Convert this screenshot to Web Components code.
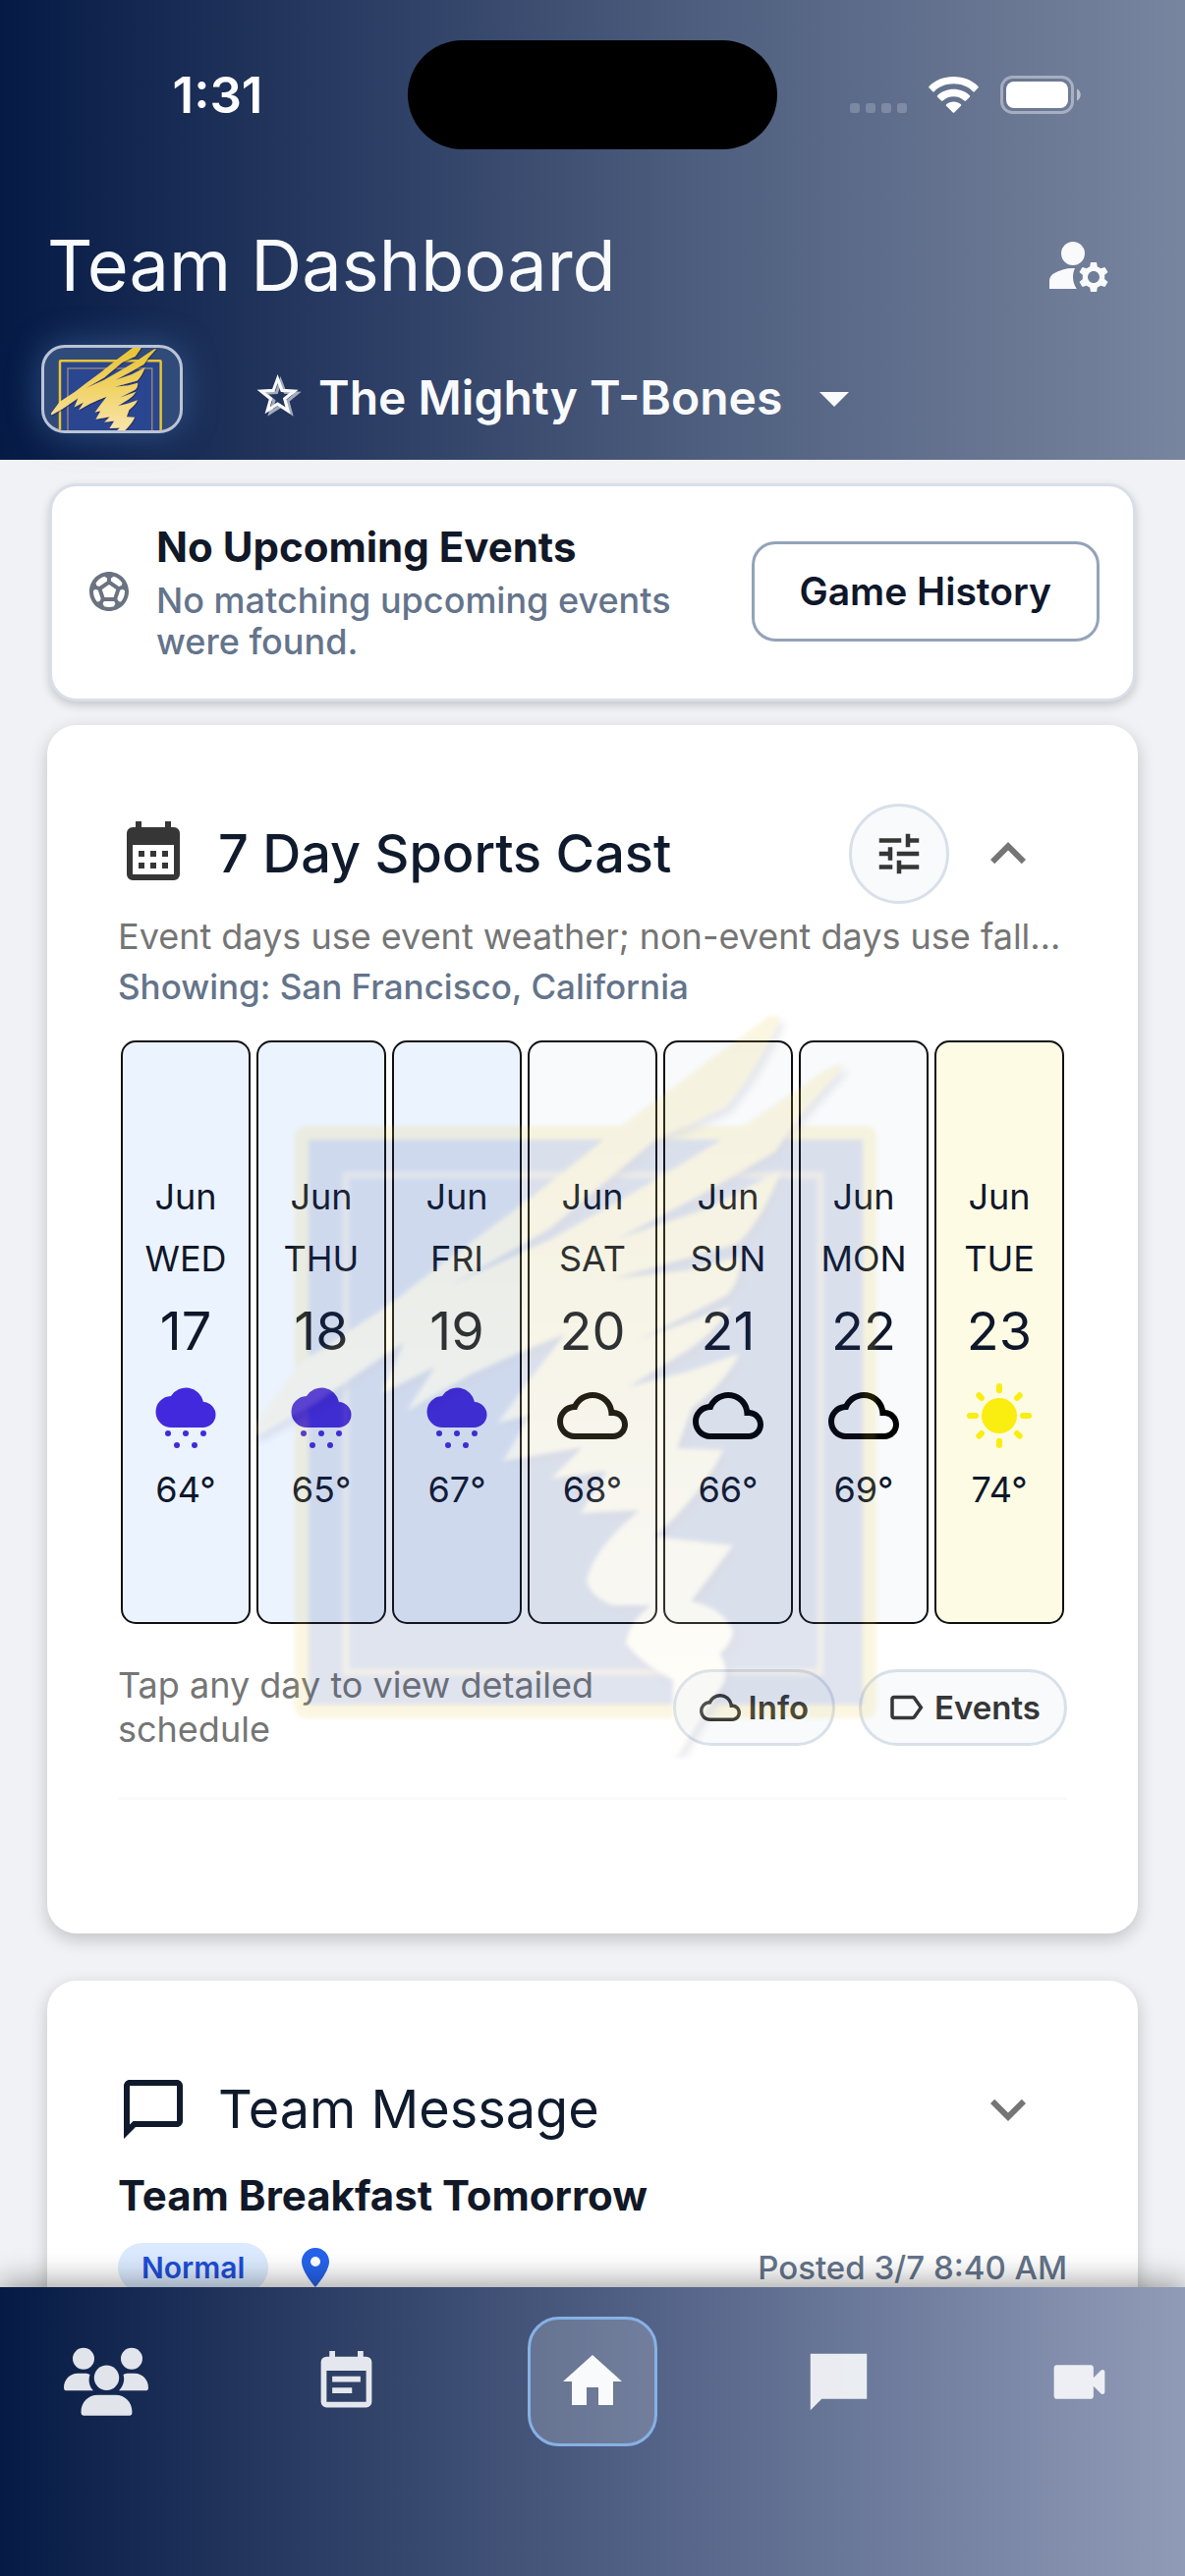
<!DOCTYPE html>
<html lang="en">
<head>
<meta charset="utf-8">
<meta name="viewport" content="width=device-width, initial-scale=1">
<title>Team Dashboard</title>
<style>
  html, body {
    margin: 0;
    height: 100%;
    background: #f1f2f5;
    font-family: Inter, "Noto Sans", sans-serif;
    color: #0f172a;
  }
</style>
</head>
<body>
<team-app>
  <status-bar slot="header" time="1:31"></status-bar>
  <team-header slot="header" heading="Team Dashboard" team="The Mighty T-Bones"></team-header>

  <event-notice heading="No Upcoming Events" action="Game History">No matching upcoming events were found.</event-notice>

  <dash-card icon="calendar" heading="7 Day Sports Cast" open>
    <round-button slot="actions" icon="tune" label="Forecast settings"></round-button>
    <sports-cast></sports-cast>
    <team-logo slot="watermark" box="15 34 777 756" soft></team-logo>
  </dash-card>

  <dash-card icon="bubble-outline" heading="Team Message">
    <team-message heading="Team Breakfast Tomorrow" priority="Normal" posted="Posted 3/7 8:40 AM"></team-message>
  </dash-card>

  <tab-bar slot="footer"></tab-bar>
</team-app>

<script>
const ICONS = {
  "manage": `<circle cx="10" cy="8" r="4"/><path d="M10.67 13.02C10.45 13.01 10.23 13 10 13c-2.42 0-4.68.67-6.61 1.82C2.51 15.34 2 16.32 2 17.35V20h9.26A6.963 6.963 0 0 1 10 16c0-1.07.25-2.06.67-2.98z"/><path d="M20.75 16c0-.22-.03-.42-.06-.63l1.14-1.01-1-1.73-1.45.49c-.32-.27-.68-.48-1.08-.63L18 11h-2l-.3 1.49c-.4.15-.76.36-1.08.63l-1.45-.49-1 1.73 1.14 1.01c-.03.21-.06.41-.06.63s.03.42.06.63l-1.14 1.01 1 1.73 1.45-.49c.32.27.68.48 1.08.63L16 21h2l.3-1.49c.4-.15.76-.36 1.08-.63l1.45.49 1-1.73-1.14-1.01c.03-.21.06-.41.06-.63zM17 18c-1.1 0-2-.9-2-2s.9-2 2-2 2 .9 2 2-.9 2-2 2z"/>`,
  "star": `<g fill="none" stroke="currentColor" stroke-width="1.5"><path opacity=".6" d="M13.2 4.6l2.2 5.6 6 .4-4.7 3.8 1.6 5.9-5-3.3-5.1 3.2 1.8-5.8-4.5-3.8 5.8-.3z"/><path d="M11.8 3.6l2.1 5.7 6 .3-4.7 3.8 1.6 5.8-5-3.3-5 3.2 1.6-5.7-4.7-3.8 6-.3z"/></g>`,
  "caret": `<path d="M7 10l5 5 5-5z"/>`,
  "soccer": `<path d="M12 2C6.48 2 2 6.48 2 12s4.48 10 10 10 10-4.48 10-10S17.52 2 12 2zm1 3.3 1.35-.95c1.82.56 3.37 1.76 4.38 3.34l-.39 1.34-1.35.46L13 6.7V5.3zm-3.35-.95L11 5.3v1.4L7.01 9.49l-1.35-.46-.39-1.34c1.01-1.57 2.56-2.77 4.38-3.34zM7.08 17.11l-1.14.1C4.73 15.81 4 13.99 4 12c0-.12.01-.23.02-.35l1-.73 1.38.48 1.46 4.34-.78 1.37zm7.42 2.48c-.79.26-1.63.41-2.5.41s-1.71-.15-2.5-.41l-.69-1.49.64-1.1h5.11l.64 1.11-.7 1.48zM14.27 15H9.73l-1.35-4.02L12 8.44l3.63 2.54L14.27 15zm3.79 2.21-1.14-.1-.79-1.37 1.46-4.34 1.39-.47 1 .73c.01.11.02.22.02.34 0 1.99-.73 3.81-1.94 5.21z"/>`,
  "calendar": `<path fill-rule="evenodd" d="M5 3h1V1h2v2h8V1h2v2h1a2 2 0 0 1 2 2v14a2 2 0 0 1-2 2H5a2 2 0 0 1-2-2V5a2 2 0 0 1 2-2zM5 9v10h14V9z"/><path d="M7 11h2v2H7zM11 11h2v2h-2zM15 11h2v2h-2zM7 15h2v2H7zM11 15h2v2h-2zM15 15h2v2h-2z"/>`,
  "tune": `<path d="M3 17v2h6v-2H3zM3 5v2h10V5H3zm10 16v-2h8v-2h-8v-2h-2v6h2zM7 9v2H3v2h4v2h2V9H7zm14 4v-2H11v2h10zm-6-4h2V7h4V5h-4V3h-2v6z"/>`,
  "less": `<path d="M12 8l-6 6 1.41 1.41L12 10.83l4.59 4.58L18 14z"/>`,
  "more": `<path d="M16.59 8.59 12 13.17 7.41 8.59 6 10l6 6 6-6z"/>`,
  "cloud": `<path d="M19.35 10.04A7.49 7.49 0 0 0 12 4C9.11 4 6.6 5.64 5.35 8.04A5.994 5.994 0 0 0 0 14c0 3.31 2.69 6 6 6h13c2.76 0 5-2.24 5-5 0-2.64-2.05-4.78-4.65-4.96zM19 18H6c-2.21 0-4-1.79-4-4s1.79-4 4-4h.71C7.37 7.69 9.48 6 12 6c3.04 0 5.5 2.46 5.5 5.5v.5H19c1.66 0 3 1.34 3 3s-1.34 3-3 3z"/>`,
  "rain": `<g transform="translate(2 2) scale(.3333)"><path d="M16 42A16 16 0 0 1 15 10A18 18 0 0 1 48 16A13 13 0 0 1 47 42Z"/><circle cx="12" cy="48" r="3"/><circle cx="30" cy="48" r="3"/><circle cx="48" cy="48" r="3"/><circle cx="21" cy="60" r="3"/><circle cx="39" cy="60" r="3"/></g>`,
  "sun": `<circle cx="12" cy="12" r="6"/><g stroke="currentColor" stroke-width="2" stroke-linecap="round"><path d="M12 2v1.4M12 20.6v1.4M2 12h2M20 12h2M5.1 5.1l.9.9M18 18l.9.9M5.1 18.9l.9-.9M18 6l.9-.9"/></g>`,
  "label": `<path d="M17.63 5.84C17.27 5.33 16.67 5 16 5L5 5.01C3.9 5.01 3 5.9 3 7v10c0 1.1.9 1.99 2 1.99L16 19c.67 0 1.27-.33 1.63-.84L22 12l-4.37-6.16zM16 17H5V7h11l3.55 5L16 17z"/>`,
  "bubble-outline": `<path d="M20 2H4c-1.1 0-2 .9-2 2v18l4-4h14c1.1 0 2-.9 2-2V4c0-1.1-.9-2-2-2zm0 14H5.2L4 17.2V4h16v12z"/>`,
  "pin": `<path d="M12 2C8.13 2 5 5.13 5 9c0 5.25 7 13 7 13s7-7.75 7-13c0-3.87-3.13-7-7-7zm0 9.5a2.5 2.5 0 0 1 0-5 2.5 2.5 0 0 1 0 5z"/>`,
  "people": `<g transform="translate(0 2.6) scale(.279)"><circle cx="20" cy="10.5" r="11"/><circle cx="69" cy="10.5" r="11"/><circle cx="43.5" cy="30" r="12.7"/><path d="M0 40C0 32 6 25.5 14 25.5h7c2 0 4 .4 5.5 1.2C24.5 33 26 39 30 43H2c-1.2 0-2-1-2-3zM86 40c0-8-6-14.5-14-14.5h-6c-2 0-4 .4-5.5 1.2C62.5 33 60 39 56 43h28c1.2 0 2-1 2-3zM17.5 65c0-10 7-17.5 17-17.5h18c10 0 17 7.5 17 17.5 0 2.5-1 3.5-3 3.5h-46c-2 0-3-1-3-3.5z"/></g>`,
  "note": `<path fill-rule="evenodd" d="M19 3h-1V1h-2v2H8V1H6v2H5a2 2 0 0 0-2 2v14a2 2 0 0 0 2 2h14a2 2 0 0 0 2-2V5a2 2 0 0 0-2-2zm0 16H5V8h14z"/><path d="M7 10h10v2H7zM7 14h7v2H7z"/>`,
  "home": `<path d="M10 20v-6h4v6h5v-8h3L12 3 2 12h3v8z"/>`,
  "bubble": `<path d="M2 2h20v16H6l-4 4z"/>`,
  "video": `<path d="M4 6h12c.55 0 1 .45 1 1v3.5l2.6-2.6c.7-.6 1.4-.2 1.4.6v7c0 .8-.7 1.2-1.4.6L17 13.5V17c0 .55-.45 1-1 1H4c-.55 0-1-.45-1-1V7c0-.55.45-1 1-1z"/>`
};

// Attaches an open shadow root filled from a template string
function render(host, html) {
  const shadow = host.shadowRoot || host.attachShadow({ mode: "open" });
  const template = document.createElement("template");
  template.innerHTML = html;
  shadow.replaceChildren(template.content.cloneNode(true));
  return shadow;
}

class TeamIcon extends HTMLElement {
  connectedCallback() {
    render(this, `
      <style>
        :host { display: inline-flex; flex: none; width: var(--size, 72px); height: var(--size, 72px); }
        svg { width: 100%; height: 100%; fill: currentColor; }
      </style>
      <svg viewBox="0 0 24 24" aria-hidden="true">${ICONS[this.getAttribute("name")] || ""}</svg>
    `);
  }
}

class TeamLogo extends HTMLElement {
  connectedCallback() {
    const soft = this.hasAttribute("soft");
    render(this, `
      <style>
        :host { display: block; }
        svg { display: block; width: 100%; height: 100%; }
        .soft { filter: blur(2px); }
      </style>
      <svg class="${soft ? "soft" : ""}" viewBox="${this.getAttribute("box")}" preserveAspectRatio="xMidYMid slice" aria-hidden="true">
        <defs>
          <linearGradient id="gold" x1="0" y1="0" x2="0" y2="1">
            <stop offset="0" stop-color="#e6c02c"/>
            <stop offset=".35" stop-color="#f0d264"/>
            <stop offset=".65" stop-color="#f8e3a4"/>
            <stop offset="1" stop-color="#fffbe8"/>
          </linearGradient>
          <filter id="shade" x="-10%" y="-10%" width="120%" height="120%">
            <feDropShadow dx="5" dy="6" stdDeviation="3" flood-color="#1a1a4a" flood-opacity=".6"/>
          </filter>
        </defs>
        <rect x="107" y="153" width="578" height="589" rx="4" fill="#2a4690" stroke="#e8c531" stroke-width="14"/>
        <rect x="152" y="196" width="483" height="506" fill="none" stroke="#a98f78" stroke-width="7"/>
        <path filter="url(#shade)" fill="url(#gold)" d="
          M580 36 Q592 30 594 37 Q570 90 539 127 L467 160 L360 250 L257 309
          L360 262 L460 205 L531 162 L560 144 L639 90 Q658 80 658 86 L610 140 L589 172 L510 218 L426 262
          L520 230 L595 191 Q575 243 550 266 L422 302 L500 293 L552 279 Q556 300 540 318 L450 364
          L543 330 Q530 354 500 374 L439 412 L500 396 L552 378 Q540 405 504 433
          L489 474 L536 476 Q515 520 466 564 L546 573 L503 630 Q535 636 546 660
          Q544 674 532 683 Q541 695 537 712 L492 783 L484 789 L485 710
          Q455 695 437 673 Q440 650 463 634 L424 634 Q400 625 397 608 Q405 575 451 537
          L391 540 L418 497 L361 505 L393 473 L312 487 L340 440 L307 448 L343 399 L375 358
          L332 375 L279 399 L214 436 L243 391 L189 418 L211 366 L121 428 L61 462 Q54 462 57 452
          L100 395 Q107 382 120 378 L193 330 L257 281 L339 220 L431 147 Z"/>
      </svg>
    `);
  }
}

class TeamApp extends HTMLElement {
  connectedCallback() {
    render(this, `
      <style>
        :host { display: flex; flex-direction: column; height: 100vh; overflow: hidden; }
        header { flex: none; background: linear-gradient(90deg, #051a45, #293b62 29%, #4f5f7f 60%, #78859f); }
        main { flex: 1; min-height: 0; overflow: hidden; display: flex; flex-direction: column; gap: 24px; padding: 24px 48px; }
        main ::slotted(*) { flex: none; }
        footer { flex: none; position: relative; box-shadow: 0 -4px 30px rgba(0, 0, 0, 0.4); }
      </style>
      <header><slot name="header"></slot></header>
      <main><slot></slot></main>
      <footer><slot name="footer"></slot></footer>
    `);
  }
}

class StatusBar extends HTMLElement {
  connectedCallback() {
    render(this, `
      <style>
        :host { display: grid; grid-template-columns: 1fr 376px 1fr; align-items: center; padding: 41px 0 36px; color: #ffffff; }
        .time { padding-left: 28px; text-align: center; font-size: 51px; line-height: 60px; font-weight: 600; }
        .island { height: 111px; border-radius: 56px; background: #000000; }
        .signs { display: flex; align-items: center; justify-content: flex-end; gap: 22px; padding-right: 106px; }
        svg { display: block; fill: currentColor; }
      </style>
      <div class="time">${this.getAttribute("time")}</div>
      <div class="island"></div>
      <div class="signs">
        <svg width="58" height="39" viewBox="0 0 58 39" opacity=".2" aria-label="No signal">
          <rect y="28" width="10" height="10" rx="3"/><rect x="16" y="28" width="10" height="10" rx="3"/>
          <rect x="32" y="28" width="10" height="10" rx="3"/><rect x="48" y="28" width="10" height="10" rx="3"/>
        </svg>
        <svg width="51" height="39" viewBox="0 0 51 39" aria-label="Wi-Fi">
          <path d="M25.5 1C35.5 1 44.5 4.7 50.3 10.7c.7.7.7 1.2 0 1.9l-3.3 3.3c-.7.7-1.3.7-2 0C40 11 33 8.3 25.5 8.3S11 11 6 15.9c-.7.7-1.3.7-2 0L.7 12.6c-.7-.7-.7-1.2 0-1.9C6.5 4.7 15.5 1 25.5 1z"/>
          <path d="M25.5 13.8c6.3 0 12 2.3 16.2 6.2.7.7.7 1.2 0 1.9l-3.4 3.4c-.7.7-1.2.7-1.9.1-3-2.7-6.8-4.2-10.9-4.2s-7.9 1.5-10.9 4.2c-.7.6-1.2.6-1.9-.1l-3.4-3.4c-.7-.7-.7-1.2 0-1.9 4.2-3.9 9.9-6.2 16.2-6.2z"/>
          <path d="M25.5 26.5c2.8 0 5.3 1 7.2 2.6.7.6.7 1.2 0 1.9l-6.2 6.3c-.7.7-1.3.7-2 0L18.3 31c-.7-.7-.7-1.3 0-1.9 1.9-1.6 4.4-2.6 7.2-2.6z"/>
        </svg>
        <svg width="82" height="39" viewBox="0 0 82 39" aria-label="Battery full">
          <rect x="1.5" y="1.5" width="72" height="36" rx="11" fill="none" stroke="currentColor" stroke-width="3" opacity=".4"/>
          <rect x="6" y="6" width="63" height="27" rx="8"/>
          <path opacity=".5" d="M78 13.5c5 2 5 10 0 12z"/>
        </svg>
      </div>
    `);
  }
}

class TeamHeader extends HTMLElement {
  connectedCallback() {
    const team = this.getAttribute("team");
    render(this, `
      <style>
        :host { display: block; padding-bottom: 27px; color: #f8fafc; }
        .top { display: flex; align-items: center; justify-content: space-between; height: 163px; padding: 0 72px 0 48px; }
        h1 { margin: 0; font-size: 72px; line-height: 84px; font-weight: 400; }
        button { display: flex; padding: 0; border: 0; background: none; color: inherit; }
        .team { display: flex; align-items: flex-end; padding-left: 42px; }
        team-logo {
          box-sizing: border-box;
          width: 144px;
          height: 90px;
          margin-right: 72px;
          border: 3px solid #bcc4d4;
          border-radius: 24px;
          overflow: hidden;
          background: #304b79;
          box-shadow: 0 0 36px rgba(96, 150, 220, 0.4);
        }
        .star { --size: 50px; margin: 0 16px 13px 0; }
        .picker { display: flex; align-items: center; height: 72px; gap: 16px; }
        select {
          appearance: none;
          padding: 0;
          border: 0;
          background: none;
          color: inherit;
          font: 600 48px/60px Inter, sans-serif;
        }
      </style>
      <div class="top">
        <h1>${this.getAttribute("heading")}</h1>
        <button aria-label="Manage account"><team-icon name="manage"></team-icon></button>
      </div>
      <div class="team">
        <team-logo box="17 78 777 473"></team-logo>
        <team-icon class="star" name="star"></team-icon>
        <label class="picker">
          <select aria-label="Team"><option>${team}</option></select>
          <team-icon name="caret"></team-icon>
        </label>
      </div>
    `);
  }
}

class EventNotice extends HTMLElement {
  connectedCallback() {
    render(this, `
      <style>
        :host {
          display: flex;
          align-items: center;
          box-sizing: border-box;
          margin: 0 2px;
          padding: 35px 34px 37px;
          border: 3px solid #d8dfe9;
          border-radius: 28px;
          background: #ffffff;
          box-shadow: 0 4px 10px rgba(0, 0, 0, 0.18);
        }
        team-icon { --size: 48px; margin-right: 24px; color: #6b7280; }
        .text { flex: 1; }
        h2 { margin: 0; font-size: 42px; line-height: 54px; font-weight: 700; color: #111827; }
        p { margin: 6px 0 0; font-size: 36px; line-height: 42px; font-weight: 500; color: #64748b; }
        button {
          height: 102px;
          margin-left: 36px;
          padding: 0 46px;
          border: 3px solid #94a3b8;
          border-radius: 24px;
          background: #ffffff;
          color: #0f172a;
          font: 600 39px/48px Inter, sans-serif;
          white-space: nowrap;
        }
      </style>
      <team-icon name="soccer"></team-icon>
      <div class="text">
        <h2>${this.getAttribute("heading")}</h2>
        <p><slot></slot></p>
      </div>
      <button>${this.getAttribute("action")}</button>
    `);
  }
}

class DashCard extends HTMLElement {
  connectedCallback() {
    const open = this.hasAttribute("open");
    render(this, `
      <style>
        :host {
          display: block;
          position: relative;
          padding: 72px;
          border-radius: 30px;
          background: #ffffff;
          box-shadow: 0 6px 18px rgba(0, 0, 0, 0.2);
        }
        :host([open]) { padding-bottom: 136px; margin-bottom: 24px; }
        .head { display: flex; align-items: center; height: 118px; color: #0f1b2d; }
        :host([open]) .head > team-icon { color: #363636; }
        h2 { flex: 1; margin: 0 0 0 30px; font-size: 54px; line-height: 66px; font-weight: 400; }
        :host([open]) h2 { font-weight: 500; }
        button { display: flex; justify-content: center; width: 120px; padding: 0; border: 0; background: none; color: #757575; }
        .mark {
          position: absolute;
          inset: 0;
          display: flex;
          justify-content: center;
          align-items: flex-start;
          padding-top: 296px;
          pointer-events: none;
          opacity: 0.14;
        }
        .mark ::slotted(*) { width: 70%; }
      </style>
      <div class="head">
        <team-icon name="${this.getAttribute("icon")}"></team-icon>
        <h2>${this.getAttribute("heading")}</h2>
        <slot name="actions"></slot>
        <button aria-expanded="${open}" aria-label="Toggle section"><team-icon name="${open ? "less" : "more"}"></team-icon></button>
      </div>
      <slot></slot>
      <div class="mark"><slot name="watermark"></slot></div>
    `);
  }
}

class RoundButton extends HTMLElement {
  connectedCallback() {
    render(this, `
      <style>
        :host { display: inline-flex; }
        button {
          display: flex;
          align-items: center;
          justify-content: center;
          width: 102px;
          height: 102px;
          padding: 0;
          border: 3px solid #d8e0ea;
          border-radius: 50%;
          background: #f8fafc;
          color: #363636;
        }
        team-icon { --size: 54px; }
      </style>
      <button aria-label="${this.getAttribute("label")}"><team-icon name="${this.getAttribute("icon")}"></team-icon></button>
    `);
  }
}

class ForecastDay extends HTMLElement {
  connectedCallback() {
    render(this, `
      <style>
        :host { display: block; }
        button {
          display: flex;
          flex-direction: column;
          align-items: center;
          box-sizing: border-box;
          width: 100%;
          height: 594px;
          padding: 126px 0 0;
          border: 2px solid #111111;
          border-radius: 15px;
          background: #f8fafc;
          color: #0f172a;
          font: 400 36px/63px Inter, sans-serif;
        }
        :host([sky="rain"]) button { background: #ebf3ff; }
        :host([sky="sun"]) button { background: #fefbe4; }
        .date { font-size: 54px; line-height: 84px; }
        team-icon { margin: 8px 0; color: #000000; }
        :host([sky="rain"]) team-icon { color: #4229dd; }
        :host([sky="sun"]) team-icon { color: #faed10; }
      </style>
      <button>
        <span>${this.getAttribute("month")}</span>
        <span>${this.getAttribute("day")}</span>
        <span class="date">${this.getAttribute("date")}</span>
        <team-icon name="${this.getAttribute("sky")}"></team-icon>
        <span>${this.getAttribute("temp")}°</span>
      </button>
    `);
  }
}

class PillButton extends HTMLElement {
  connectedCallback() {
    render(this, `
      <style>
        :host { display: inline-flex; flex: none; }
        button {
          display: flex;
          align-items: center;
          gap: 8px;
          height: 78px;
          padding: 0 24px;
          border: 3px solid #d8e0ea;
          border-radius: 39px;
          background: #f8fafc;
          color: #363636;
          font: 600 33px/42px Inter, sans-serif;
        }
        team-icon { --size: 42px; }
      </style>
      <button><team-icon name="${this.getAttribute("icon")}"></team-icon><slot></slot></button>
    `);
  }
}

class SportsCast extends HTMLElement {
  connectedCallback() {
    const days = [
      ["WED", 17, "rain", 64],
      ["THU", 18, "rain", 65],
      ["FRI", 19, "rain", 67],
      ["SAT", 20, "cloud", 68],
      ["SUN", 21, "cloud", 66],
      ["MON", 22, "cloud", 69],
      ["TUE", 23, "sun", 74]
    ];

    render(this, `
      <style>
        :host { display: block; font-size: 36px; line-height: 51px; color: #757575; }
        p { margin: 0; }
        .place { font-size: 35px; font-weight: 500; color: #64748b; }
        .days { display: grid; grid-template-columns: repeat(7, 1fr); gap: 6px; margin: 29px 3px 40px; }
        .foot { display: flex; align-items: center; gap: 24px; line-height: 45px; padding-bottom: 46px; border-bottom: 3px solid #fafaf8; }
        .foot p { flex: 1; }
      </style>
      <p>Event days use event weather; non-event days use fall…</p>
      <p class="place">Showing: San Francisco, California</p>
      <div class="days">
        ${days.map(([day, date, sky, temp]) => `<forecast-day month="Jun" day="${day}" date="${date}" sky="${sky}" temp="${temp}"></forecast-day>`).join("")}
      </div>
      <div class="foot">
        <p>Tap any day to view detailed schedule</p>
        <pill-button icon="cloud">Info</pill-button>
        <pill-button icon="label">Events</pill-button>
      </div>
    `);
  }
}

class TeamMessage extends HTMLElement {
  connectedCallback() {
    render(this, `
      <style>
        :host { display: block; }
        h3 { margin: 0 0 20px; font-size: 42px; line-height: 57px; font-weight: 700; color: #111827; }
        .meta { display: flex; align-items: center; gap: 24px; }
        .tag { padding: 0 24px; border-radius: 25px; background: #dbeafe; color: #1d4ed8; font-size: 30px; line-height: 50px; font-weight: 600; }
        team-icon { --size: 48px; color: #2563eb; }
        time { margin-left: auto; color: #64748b; font-size: 33px; line-height: 42px; font-weight: 500; }
      </style>
      <h3>${this.getAttribute("heading")}</h3>
      <div class="meta">
        <span class="tag">${this.getAttribute("priority")}</span>
        <team-icon name="pin"></team-icon>
        <time>${this.getAttribute("posted")}</time>
      </div>
    `);
  }
}

class TabBar extends HTMLElement {
  connectedCallback() {
    render(this, `
      <style>
        :host { display: block; background: linear-gradient(90deg, #051a45, #293b62 25%, #57668a 58%, #909bb7); }
        nav { display: flex; justify-content: space-between; height: 132px; padding: 30px 48px 132px; }
        button {
          display: flex;
          align-items: center;
          justify-content: center;
          width: 120px;
          padding: 0;
          border: 0;
          background: none;
          color: rgba(248, 250, 252, 0.9);
        }
        team-icon { --size: 69px; }
        .people { --size: 86px; }
        .home { --size: 72px; }
        button[aria-current] {
          box-sizing: border-box;
          width: 132px;
          border: 3px solid #86b1e6;
          border-radius: 32px;
          background: rgba(255, 255, 255, 0.18);
          color: #f8fafc;
        }
      </style>
      <nav>
        <button aria-label="Roster"><team-icon class="people" name="people"></team-icon></button>
        <button aria-label="Schedule"><team-icon name="note"></team-icon></button>
        <button aria-label="Home" aria-current="page"><team-icon class="home" name="home"></team-icon></button>
        <button aria-label="Chat"><team-icon name="bubble"></team-icon></button>
        <button aria-label="Video"><team-icon name="video"></team-icon></button>
      </nav>
    `);
  }
}

customElements.define("team-icon", TeamIcon);
customElements.define("team-logo", TeamLogo);
customElements.define("team-app", TeamApp);
customElements.define("status-bar", StatusBar);
customElements.define("team-header", TeamHeader);
customElements.define("event-notice", EventNotice);
customElements.define("dash-card", DashCard);
customElements.define("round-button", RoundButton);
customElements.define("forecast-day", ForecastDay);
customElements.define("pill-button", PillButton);
customElements.define("sports-cast", SportsCast);
customElements.define("team-message", TeamMessage);
customElements.define("tab-bar", TabBar);
</script>
</body>
</html>
